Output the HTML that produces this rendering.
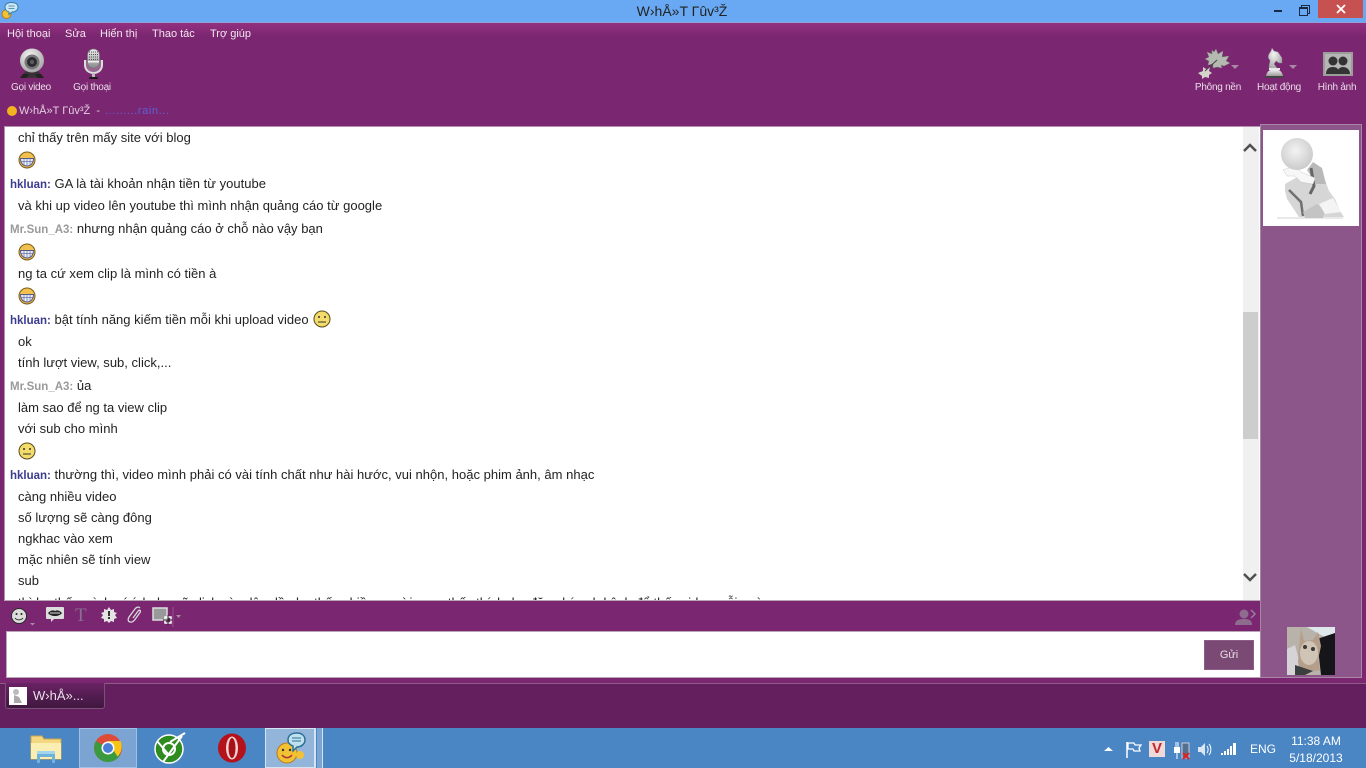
<!DOCTYPE html>
<html><head><meta charset="utf-8"><style>
html,body{margin:0;padding:0;width:1366px;height:768px;overflow:hidden;background:#7a2670;font-family:"Liberation Sans","DejaVu Sans",sans-serif}
div,span,svg{position:absolute}
.t{white-space:nowrap;font-size:13px;line-height:14px;color:#222;letter-spacing:.01px}
.t b,.t span{position:static}
.m{white-space:nowrap;font-size:11px;line-height:14px;color:#f3e6f0}
.s{white-space:nowrap;font-size:10px;line-height:12px;color:#eadde8;text-align:center;letter-spacing:-.25px}
.n1{color:#3b3b8f;font-weight:bold;font-size:11.5px;letter-spacing:0}
.n2{color:#9a9a9a;font-weight:bold;font-size:11.5px;letter-spacing:0}
</style></head><body>
<svg width="0" height="0" style="left:0;top:0"><defs>
<linearGradient id="sil" x1="0" y1="0" x2="0" y2="1"><stop offset="0" stop-color="#eee"/><stop offset="1" stop-color="#8a8a8a"/></linearGradient>
<radialGradient id="gry" cx=".4" cy=".3" r=".8"><stop offset="0" stop-color="#f4f4f4"/><stop offset="1" stop-color="#9c9c9c"/></radialGradient>
<radialGradient id="ball" cx=".45" cy=".4" r=".7"><stop offset="0" stop-color="#f3f3f3"/><stop offset="1" stop-color="#c4c4c4"/></radialGradient>
<g id="grin"><circle cx="9" cy="9" r="8" fill="#f0c14f" stroke="#7a5a1a"/><path d="M2.500 7.500h13c0 5-3 7.500-6.500 7.500s-6.500-2.500-6.500-7.500z" fill="#e8eefc" stroke="#555a88"/><path d="M3 10.500h12M6 8v6.500M9 8v7M12 8v6.500" stroke="#6a70a0" stroke-width=".7"/></g>
<g id="neu"><circle cx="9" cy="9" r="8" fill="#f3dc6a" stroke="#5a4a1a"/><circle cx="6" cy="7" r="1" fill="#333"/><circle cx="12" cy="7" r="1" fill="#333"/><path d="M5 12h8" stroke="#333"/></g>
</defs></svg>
<div style="left:0;top:0;width:1366px;height:23px;background:#69a9f3"></div>
<div style="left:0;top:22px;width:1366px;height:1px;background:#8fa0d8"></div>
<div style="left:0;top:23px;width:1366px;height:101px;background:linear-gradient(#93307f 0,#7a2670 14px,#7a2670 100%)"></div>
<svg style="left:1px;top:2px" width="18" height="17" viewBox="0 0 18 17"><circle cx="5.500" cy="12" r="4.500" fill="#f3c234" stroke="#b8791a"/><path d="M4 5c0-3 3-4.500 6.500-4.500S17 2 17 5s-2.500 5-6 5l-3 2.500V10C5.500 9.500 4 7.500 4 5z" fill="#cfe6f5" stroke="#2c7fa6"/><path d="M7.500 4h6M7.500 6.500h6" stroke="#2c7fa6" stroke-width=".8"/></svg>
<div class="t" style="left:0;width:1364px;top:3px;text-align:center;font-size:14px;line-height:16px;color:#222;letter-spacing:0">W›hÅ»T Γûv³Ž</div>
<div style="left:1274px;top:10px;width:8px;height:2px;background:#1a2a44"></div>
<div style="left:1301px;top:5px;width:7px;height:7px;border:1px solid #1a2a44"></div>
<div style="left:1299px;top:7px;width:7px;height:6px;border:1px solid #1a2a44;background:#69a9f3;border-top-width:2px"></div>
<div style="left:1318px;top:0;width:45px;height:18px;background:#c75050"></div>
<svg style="left:1336px;top:4px" width="10" height="10" viewBox="0 0 10 10"><path d="M1 1l8 8M9 1l-8 8" stroke="#fff" stroke-width="1.800"/></svg>

<div class="m" style="left:7px;top:27px">Hội thoại</div>
<div class="m" style="left:65px;top:27px">Sửa</div>
<div class="m" style="left:100px;top:27px">Hiển thị</div>
<div class="m" style="left:152px;top:27px">Thao tác</div>
<div class="m" style="left:210px;top:27px">Trợ giúp</div>

<svg style="left:17px;top:47px" width="30" height="33" viewBox="0 0 30 33"><path d="M9 24l-5 6 3 1h16l3-1-5-6z" fill="#3a3036"/><path d="M6 27l-3 4h6l3-4zM24 27l3 4h-6l-3-4z" fill="#222"/><circle cx="15" cy="13.500" r="12" fill="url(#gry)"/><circle cx="15" cy="15" r="7.500" fill="#77757a"/><circle cx="15" cy="15" r="5" fill="#2b2b2e"/><circle cx="15" cy="15" r="2.200" fill="#5a5a60"/></svg>
<svg style="left:82px;top:47px" width="24" height="34" viewBox="0 0 24 34"><path d="M3 13v5c0 5 4 8 8.500 8s8.500-3 8.500-8v-5" fill="#b8a7b6" fill-opacity=".5" stroke="#ddd" stroke-width="2"/><rect x="5.500" y="2" width="12" height="19" rx="6" fill="url(#sil)" stroke="#777" stroke-width=".7"/><path d="M7 5h9M7 7.500h9M7 10h9M7 12.500h9" stroke="#555" stroke-dasharray="1 1"/><rect x="6" y="14" width="11" height="1.500" fill="#f0f0f0"/><rect x="10" y="26" width="3" height="4" fill="#bbb"/><rect x="7" y="30" width="9" height="2" rx="1" fill="#1a1a1a"/></svg>
<div class="s" style="left:1px;width:60px;top:82px">Gọi video</div>
<div class="s" style="left:62px;width:60px;top:82px">Gọi thoại</div>

<div style="left:7px;top:106px;width:10px;height:10px;border-radius:50%;background:#f5b21f"></div>
<div class="m" style="left:19px;top:104px;color:#e3cfe0">W›hÅ»T Γûv³Ž&nbsp; -</div>
<div class="m" style="left:105px;top:104px;color:#5a62d8;letter-spacing:.6px">.........rain...</div>

<svg style="left:1197px;top:47px" width="34" height="32" viewBox="0 0 34 32"><path d="M19 2l2 5 5-3-1 6 7-1-3 5 4 2-6 3-3-1 1 3-5-1-4 1 0-4-5 1 1-4-4-2 4-2-2-5 5 2 0-4 2 2z" fill="#b5bab0" stroke="#7d807a" stroke-width=".5"/><path d="M1 26l5-2 0-4 3 2 4-2-1 4 3 2-3 2 0 3-4-1-3 2 0-3z" fill="#d4d4cc"/><path d="M8 24L20 13" stroke="#49404a" stroke-width="1"/></svg>
<svg style="left:1231px;top:65px" width="9" height="5"><path d="M0 0h8l-4 4z" fill="#a98aa6"/></svg>
<svg style="left:1264px;top:47px" width="22" height="32" viewBox="0 0 22 32"><path d="M8 1l2 3 4 1 4 6 0 5-3 0-3-2-2 3 3 4c-2 1-6 1-8 0 0-4 1-5 1-8-2-1-2-4-1-6l2-3z" fill="url(#gry)" stroke="#888" stroke-width=".4"/><rect x="5" y="21" width="11" height="2" fill="#e6e6e6"/><path d="M2 30c0-4 3-7 5-7h7c2 0 5 3 5 7z" fill="url(#sil)"/><rect x="1" y="29" width="19" height="2" rx="1" fill="#444"/></svg>
<svg style="left:1289px;top:65px" width="9" height="5"><path d="M0 0h8l-4 4z" fill="#a98aa6"/></svg>
<div style="left:1323px;top:52px;width:26px;height:20px;background:#b6b6b6;border:2px solid #9c9c9c"></div>
<svg style="left:1325px;top:54px" width="26" height="20" viewBox="0 0 26 20"><circle cx="8" cy="7" r="4.500" fill="#333"/><path d="M1 20c0-5 3-7 7-7s6 2 6 7z" fill="#333"/><circle cx="18" cy="7" r="4.500" fill="#333"/><path d="M12 20c0-5 3-7 6-7s7 2 7 7z" fill="#333"/></svg>
<div class="s" style="left:1188px;width:60px;top:82px">Phông nền</div>
<div class="s" style="left:1249px;width:60px;top:82px">Hoạt động</div>
<div class="s" style="left:1307px;width:60px;top:82px">Hình ảnh</div>

<div style="left:5px;top:126px;width:1255px;height:474px;background:#fff;overflow:hidden;border-top:1px solid #b78fb0">
<div style="left:0;top:1px;width:1238px;height:473px">
<div class="t" style="left:13px;top:3px">chỉ thấy trên mấy site với blog</div>
<div class="t" style="left:5px;top:49px"><span class="n1">hkluan:</span> GA là tài khoản nhận tiền từ youtube</div>
<div class="t" style="left:13px;top:71px">và khi up video lên youtube thì mình nhận quảng cáo từ google</div>
<div class="t" style="left:5px;top:94px"><span class="n2">Mr.Sun_A3:</span> nhưng nhận quảng cáo ở chỗ nào vậy bạn</div>
<div class="t" style="left:13px;top:139px">ng ta cứ xem clip là mình có tiền à</div>
<div class="t" style="left:5px;top:185px"><span class="n1">hkluan:</span> bật tính năng kiếm tiền mỗi khi upload video</div>
<div class="t" style="left:13px;top:207px">ok</div>
<div class="t" style="left:13px;top:228px">tính lượt view, sub, click,...</div>
<div class="t" style="left:5px;top:251px"><span class="n2">Mr.Sun_A3:</span> ủa</div>
<div class="t" style="left:13px;top:273px">làm sao để ng ta view clip</div>
<div class="t" style="left:13px;top:294px">với sub cho mình</div>
<div class="t" style="left:5px;top:340px"><span class="n1">hkluan:</span> thường thì, video mình phải có vài tính chất như hài hước, vui nhộn, hoặc phim ảnh, âm nhạc</div>
<div class="t" style="left:13px;top:362px">càng nhiều video</div>
<div class="t" style="left:13px;top:383px">số lượng sẽ càng đông</div>
<div class="t" style="left:13px;top:404px">ngkhac vào xem</div>
<div class="t" style="left:13px;top:425px">mặc nhiên sẽ tính view</div>
<div class="t" style="left:13px;top:446px">sub</div>
<div class="t" style="left:13px;top:468px">thì họ thấy mình có ích, họ sẽ click vào, lâu dần họ thấy nhiều người xem, thấy thích, họ đăng ký sub kênh để thấy video mỗi ngày</div>
<svg style="left:13px;top:23px" width="18" height="18" viewBox="0 0 18 18"><use href="#grin"/></svg>
<svg style="left:13px;top:115px" width="18" height="18" viewBox="0 0 18 18"><use href="#grin"/></svg>
<svg style="left:13px;top:159px" width="18" height="18" viewBox="0 0 18 18"><use href="#grin"/></svg>
<svg style="left:308px;top:182px" width="18" height="18" viewBox="0 0 18 18"><use href="#neu"/></svg>
<svg style="left:13px;top:314px" width="18" height="18" viewBox="0 0 18 18"><use href="#neu"/></svg>
</div>
<div style="left:1238px;top:0;width:16px;height:474px;background:#f0f0f0"></div>
<div style="left:1238px;top:185px;width:15px;height:127px;background:#cdcdcd"></div>
<svg style="left:1238px;top:15px" width="14" height="12" viewBox="0 0 14 12"><path d="M1 9l6-6 6 6" fill="none" stroke="#505050" stroke-width="2.500"/></svg>
<svg style="left:1238px;top:444px" width="14" height="12" viewBox="0 0 14 12"><path d="M1 3l6 6 6-6" fill="none" stroke="#505050" stroke-width="2.500"/></svg>
</div>
<div style="left:4px;top:600px;width:1256px;height:1px;background:#b9a5b6"></div>
<div style="left:4px;top:126px;width:1px;height:474px;background:#b78fb0"></div>

<div style="left:1260px;top:124px;width:102px;height:554px;background:#8c568a;border:1px solid #a887a5;box-sizing:border-box"></div>
<div style="left:1263px;top:130px;width:96px;height:96px;background:#fff"></div>
<svg style="left:1263px;top:130px" width="96" height="96" viewBox="0 0 96 96"><path d="M14 88h66" stroke="#e2e2e2" stroke-width="1.500"/><path d="M22 54l14-8 10 3 6-12 6 2 8 22 6 8 5 12 4 6H36l-12-18-2-8z" fill="#d6d6d6"/><path d="M44 40l6-8 9 6 4 16-10 0z" fill="#b9b9b9"/><path d="M48 38l3 18-4 8" fill="none" stroke="#666" stroke-width="3"/><path d="M26 60l12 12 2 14" fill="none" stroke="#707070" stroke-width="2.500"/><path d="M20 40l12-4 6 6 14 6-2 6-12-2-6-6-8 0z" fill="#f7f7f7" stroke="#ccc" stroke-width=".5"/><path d="M40 82l14-8 8 6-2 8H42z" fill="#c4c4c4"/><path d="M56 74l14-6 8 14-16 2z" fill="#f4f4f4"/><circle cx="34" cy="24" r="16" fill="url(#ball)"/></svg>
<div style="left:1287px;top:627px;width:48px;height:48px;overflow:hidden;background:#bcb5ac"></div>
<svg style="left:1287px;top:627px" width="48" height="48" viewBox="0 0 48 48"><rect width="48" height="48" fill="#b8b2aa"/><path d="M20 0h28v16z" fill="#dfe7ea"/><path d="M30 12l18-6v42H34z" fill="#16161a"/><path d="M0 22l8-4 8 30H0z" fill="#d5d3d6"/><path d="M14 2l3 12 9-1 5-8 3 14-3 14 2 10-20 4-2-12 1-14z" fill="#b59f8a"/><ellipse cx="22" cy="26" rx="9" ry="12" fill="#cfc4b6"/><circle cx="18" cy="20" r="2" fill="#3c3836"/><circle cx="26" cy="22" r="2" fill="#3c3836"/><path d="M8 38l18 6-8 4H8z" fill="#3b3f3d"/></svg>

<svg style="left:10px;top:606px" width="28" height="22" viewBox="0 0 28 22"><circle cx="9" cy="10" r="7.500" fill="#dcdcdc" stroke="#2a2a2a"/><circle cx="6.500" cy="8" r="1" fill="#222"/><circle cx="11.500" cy="8" r="1" fill="#222"/><path d="M5 12c2 2.500 6 2.500 8 0" fill="none" stroke="#222"/><path d="M20 17h5l-2.500 2.500z" fill="#a98aa6"/></svg>
<svg style="left:45px;top:606px" width="20" height="17" viewBox="0 0 20 17"><rect x="1" y="1" width="18" height="12" rx="1" fill="#ddd"/><path d="M3 7c3-3 5-3 7-2 2-1 4-1 7 2-3 4-11 4-14 0z" fill="#222"/><path d="M5 7h10" stroke="#ddd"/><path d="M6 13v3l3-3z" fill="#ddd"/></svg>
<div style="left:75px;top:605px;font:19px/22px 'Liberation Serif',serif;color:#8a6d92">T</div>
<svg style="left:100px;top:606px" width="18" height="18" viewBox="0 0 18 18"><path d="M9 1l2 3 3-1 0 3 3 1-2 2 2 3-3 1 0 3-3-1-2 2-2-2-3 1 0-3-3-1 2-3-2-2 3-1 0-3 3 1z" fill="#e4e4e4"/><rect x="8" y="5" width="2" height="5" fill="#333"/><rect x="8" y="11" width="2" height="2" fill="#333"/></svg>
<svg style="left:126px;top:606px" width="18" height="18" viewBox="0 0 18 18"><path d="M14 2c-1.500-1.500-3.500-1-5 1l-6 8c-1.500 2.500-1 4.500 1 5s3.500-.5 5-2.500l5-7c1-1.500 0-3-1.500-2l-5.500 7.500" fill="none" stroke="#d8d8d8" stroke-width="1.300"/></svg>
<svg style="left:152px;top:607px" width="30" height="21" viewBox="0 0 30 21"><rect x="1" y="1" width="14" height="12" fill="#999" stroke="#ddd" stroke-width="1.500"/><rect x="13" y="10" width="6" height="6" fill="none" stroke="#fff" stroke-width="1.500"/><path d="M11 13h10M16 8v10" stroke="#222" stroke-width="1"/><path d="M21 0v20" stroke="#93508c"/><path d="M24 8h5l-2.500 3z" fill="#a98aa6"/></svg>
<svg style="left:1234px;top:607px" width="24" height="19" viewBox="0 0 24 19"><circle cx="10" cy="7" r="4.500" fill="#8d6c8d"/><path d="M1 18c0-5 4-6 9-6s8 1 8 6z" fill="#8d6c8d"/><path d="M17 3l4 4-4 4" fill="none" stroke="#9a7f9a" stroke-width="1.500"/></svg>

<div style="left:6px;top:631px;width:1254px;height:47px;background:#fff;border:1px solid #b9a5b6;border-right:0;box-sizing:border-box"></div>
<div style="left:1204px;top:640px;width:50px;height:30px;background:#7b4a74;border:1px solid #8c5e85;box-sizing:border-box;color:#e6dbe5;font-size:11px;line-height:29px;text-align:center">Gửi</div>

<div style="left:0;top:683px;width:1366px;height:45px;background:#631f5e"></div>
<div style="left:0;top:683px;width:1366px;height:1px;background:#8c5e87"></div>
<div style="left:5px;top:683px;width:100px;height:26px;background:linear-gradient(#6a2264,#3f1840);border:1px solid #7d5078;border-top:0;border-radius:0 0 3px 3px;box-sizing:border-box"></div>
<div style="left:9px;top:687px;width:18px;height:18px;background:#fff"></div>
<svg style="left:9px;top:687px" width="18" height="18" viewBox="0 0 18 18"><circle cx="7" cy="5" r="3" fill="#bbb"/><path d="M5 8l5 2 3 6H5z" fill="#aaa"/></svg>
<div class="t" style="left:33px;top:689px;font-size:13px;color:#eadfe9;letter-spacing:0">W›hÅ»...</div>

<div style="left:0;top:728px;width:1366px;height:40px;background:#4a85c4"></div>
<div style="left:79px;top:728px;width:58px;height:40px;background:#7ba4d2;border:1px solid #9dc0e4;box-sizing:border-box"></div>
<div style="left:265px;top:728px;width:50px;height:40px;background:#94b5da;border:1px solid #d5e3f2;box-sizing:border-box"></div>
<div style="left:315px;top:728px;width:1px;height:40px;background:#d5e3f2"></div>
<div style="left:317px;top:728px;width:6px;height:40px;background:#7ba4d2;border-right:1px solid #d5e3f2;box-sizing:border-box"></div>
<svg style="left:29px;top:733px" width="34" height="32" viewBox="0 0 34 32"><path d="M2 3h11l2 3h17v20H2z" fill="#f5d77f" stroke="#c9a64c"/><rect x="2" y="10" width="30" height="16" fill="#fbeeb2"/><path d="M8 20h18v10h-3v-6H11v6H8z" fill="#6fb3dc"/><rect x="8" y="18" width="18" height="3" fill="#a5d4ef"/></svg>
<svg style="left:93px;top:733px" width="30" height="30" viewBox="0 0 30 30"><circle cx="15" cy="15" r="14" fill="#dd4b39"/><path d="M15 15L27.100 22A14 14 0 0 1 8 27.100z" fill="#3a9a3f"/><path d="M15 8h12.500a14 14 0 0 1-3 15.500L19 15z" fill="#f5c518"/><path d="M15 15L3 8A14 14 0 0 0 8 27.100z" fill="#3a9a3f"/><circle cx="15" cy="15" r="6.500" fill="#fff"/><circle cx="15" cy="15" r="5" fill="#4a7fd8"/></svg>
<svg style="left:154px;top:732px" width="32" height="32" viewBox="0 0 32 32"><circle cx="15" cy="17" r="14" fill="#2e8b1e" stroke="#fff" stroke-width="1.500"/><circle cx="15" cy="17" r="6" fill="none" stroke="#fff" stroke-width="2"/><path d="M3 9l12 14M9 30L28 4M16 10L31 1" stroke="#fff" stroke-width="2" fill="none"/></svg>
<svg style="left:217px;top:733px" width="30" height="30" viewBox="0 0 30 30"><ellipse cx="15" cy="15" rx="14" ry="14.500" fill="#b5121b"/><ellipse cx="15" cy="15" rx="6" ry="11.500" fill="#f0d5d5"/><ellipse cx="15" cy="15" rx="3.500" ry="10" fill="#a91018"/></svg>
<svg style="left:274px;top:731px" width="32" height="34" viewBox="0 0 32 34"><circle cx="13" cy="22" r="10" fill="#f3c234" stroke="#b8791a"/><path d="M8 24c3 3.500 7 3.500 10 0" fill="none" stroke="#a33" stroke-width="1.500"/><circle cx="9" cy="19" r="1.200" fill="#333"/><circle cx="16" cy="19" r="1.200" fill="#333"/><path d="M14 9c0-5 4-7 9-7s8 3 8 7-4 7-8 7l-4 4v-5c-3-1-5-3-5-6z" fill="#bfe0ef" stroke="#2c6f96" stroke-width="1.500"/><path d="M18 7h9M18 10h9" stroke="#2c6f96"/><circle cx="26" cy="24" r="4" fill="#f3c234"/></svg>

<svg style="left:1104px;top:746px" width="10" height="6"><path d="M0 5l4.500-4 4.500 4z" fill="#fff"/></svg>
<svg style="left:1125px;top:741px" width="18" height="18" viewBox="0 0 18 18"><path d="M2 1v16" stroke="#fff" stroke-width="1.500"/><path d="M3 2h6l1 2h6l-2 3 1 3h-6l-1-2H3z" fill="none" stroke="#fff" stroke-width="1.300"/></svg>
<div style="left:1149px;top:741px;width:16px;height:16px;background:#f0d9d9"></div>
<div class="t" style="left:1149px;top:741px;width:16px;text-align:center;font:bold 15px/16px 'Liberation Sans',sans-serif;color:#c8262a">V</div>
<svg style="left:1173px;top:740px" width="18" height="20" viewBox="0 0 18 20"><rect x="1" y="7" width="6" height="6" fill="#fff"/><path d="M3 2v5M5 2v5M4 13v6" stroke="#fff"/><rect x="9" y="3" width="7" height="15" fill="#55708f" stroke="#ccd"/><path d="M10 13l6 6M16 13l-6 6" stroke="#d22" stroke-width="2"/></svg>
<svg style="left:1197px;top:741px" width="16" height="16" viewBox="0 0 16 16"><path d="M1 6h3l4-4v13l-4-4H1z" fill="#dbe6f3"/><path d="M10 5c1.500 2 1.500 5 0 7M12 3c2.500 3 2.500 8 0 11" fill="none" stroke="#fff"/></svg>
<svg style="left:1221px;top:742px" width="16" height="14"><rect x="0" y="11" width="2" height="2" fill="#fff"/><rect x="3" y="9" width="2" height="4" fill="#fff"/><rect x="6" y="7" width="2" height="6" fill="#fff"/><rect x="9" y="4" width="2" height="9" fill="#fff"/><rect x="12" y="1" width="3" height="12" fill="#fff"/></svg>
<div class="t" style="left:1250px;top:742px;color:#fff;font-size:12px;letter-spacing:0">ENG</div>
<div class="t" style="left:1285px;top:734px;width:62px;text-align:center;color:#fff;font-size:12px;letter-spacing:0">11:38 AM</div>
<div class="t" style="left:1285px;top:751px;width:62px;text-align:center;color:#fff;font-size:12px;letter-spacing:0">5/18/2013</div>
</body></html>
